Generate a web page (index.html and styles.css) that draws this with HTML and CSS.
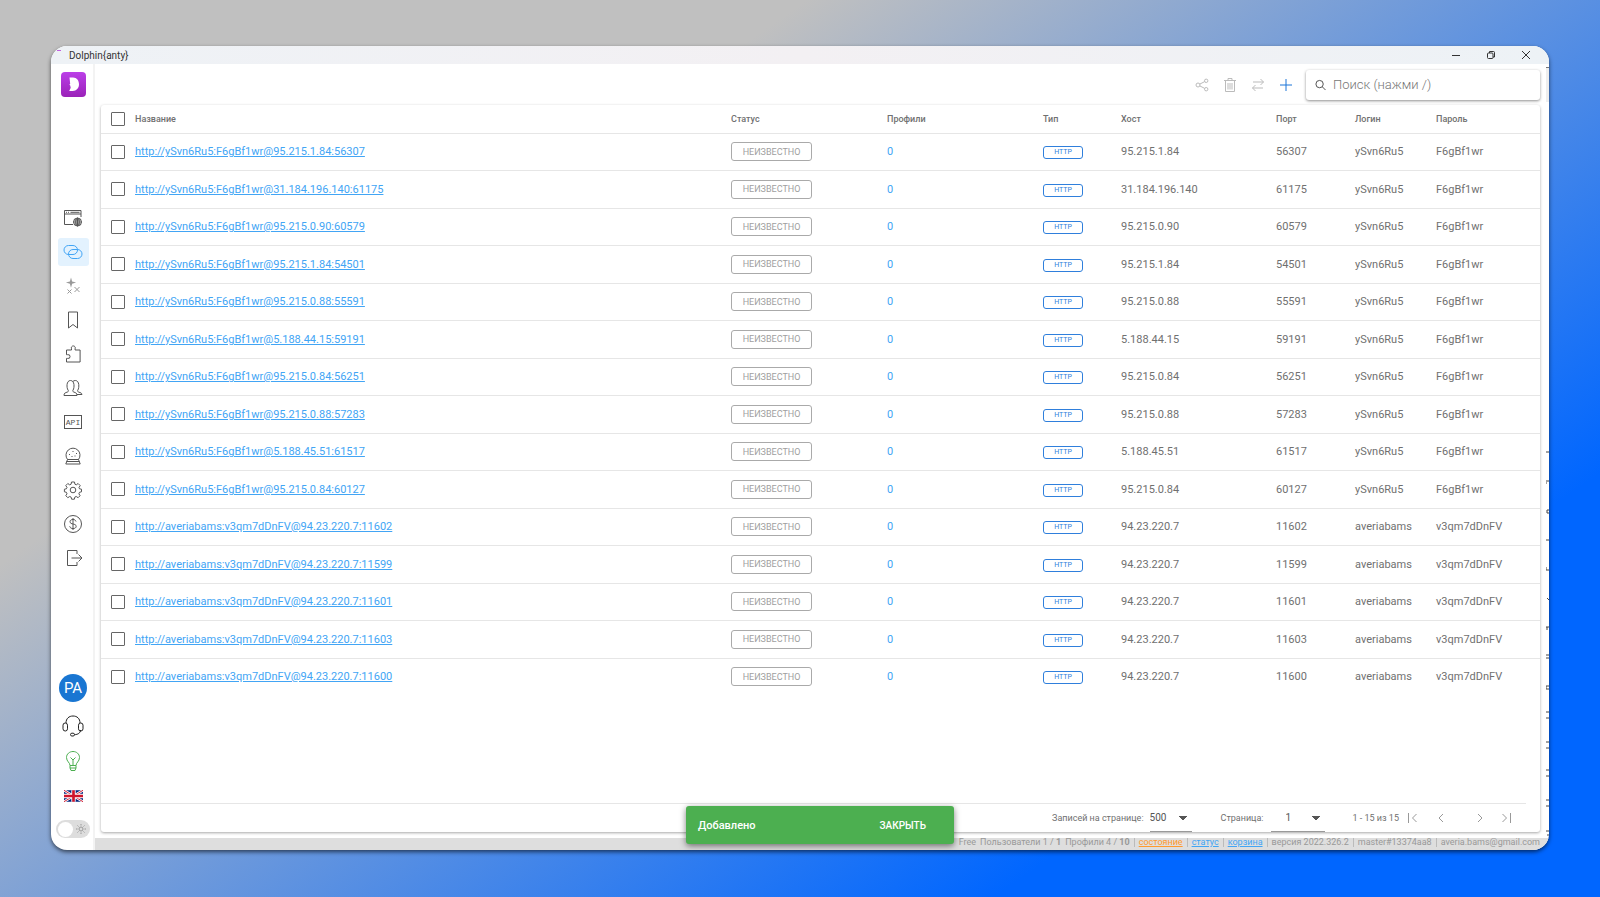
FILE: index.html
```
<!DOCTYPE html>
<html lang="ru">
<head>
<meta charset="utf-8">
<title>Dolphin{anty}</title>
<link rel="stylesheet" href="styles.css">
</head>
<body>
<div class="window">
  <header class="titlebar">
    <span class="title-mark"></span>
    <span class="title">Dolphin{anty}</span>
    <div class="win-controls">
      <button aria-label="Свернуть"><svg width="10" height="10" viewBox="0 0 10 10"><path d="M1 5.5h8"/></svg></button>
      <button aria-label="Развернуть"><svg width="10" height="10" viewBox="0 0 10 10"><rect x="1.5" y="3" width="5.500" height="5.500" rx="1"/><path d="M3.500 3V1.500h4a1 1 0 0 1 1 1V7H7"/></svg></button>
      <button aria-label="Закрыть"><svg width="10" height="10" viewBox="0 0 10 10"><path d="M1 1l8 8M9 1L1 9"/></svg></button>
    </div>
  </header>
  <div class="body">
    <nav class="sidebar">
      <a class="logo" href="#" aria-label="Dolphin"><svg width="25" height="25" viewBox="0 0 25 25"><defs><linearGradient id="lg" x1="0" y1="0" x2="0" y2="1"><stop offset="0" stop-color="#bb3fe8"/><stop offset="1" stop-color="#9a22b8"/></linearGradient></defs><rect width="25" height="25" rx="4" fill="url(#lg)" stroke="none"/><path d="M8.500 5.500H12c3.900 0 6 3 6 6.800 0 3.900-2.500 6.700-6.300 6.700H8.200l1.500-3.200-.5-2.300-.8-.8.8-1z" fill="#fff" stroke="none"/></svg></a>
      <div class="nav-main">
        <a href="#" aria-label="Профили"><svg width="20" height="20" viewBox="0 0 20 20"><path d="M10 16.500H1.500v-14H18V9M1.500 6H18M3 4.300h1M5 4.300h1M7.500 4.300h9"/><circle cx="14.500" cy="14" r="4"/><path d="M10.500 14h8M14.500 10v8M11.500 12h6M11.500 16h6"/><ellipse cx="14.500" cy="14" rx="1.800" ry="4"/></svg></a>
        <a href="#" class="active" aria-label="Прокси"><svg width="20" height="20" viewBox="0 0 20 20"><rect x="1" y="3.500" width="13.500" height="9" rx="4.500"/><rect x="5.500" y="7.500" width="13.500" height="9" rx="4.500"/></svg></a>
        <a href="#" class="pale" aria-label="Автоматизация"><svg width="20" height="20" viewBox="0 0 20 20"><path d="M4.500 13.500l4 4M8.500 13.500l-4 4M11.500 11l5 5M16.500 11l-5 5"/><path d="M8 1.500l1.100 4 4 1.100-4 1.100-1.100 4-1.100-4-4-1.100 4-1.100z" fill="currentColor" stroke="none"/></svg></a>
        <a href="#" aria-label="Закладки"><svg width="20" height="20" viewBox="0 0 20 20"><path d="M5.500 2h9v16L10 14.500 5.500 18z"/></svg></a>
        <a href="#" aria-label="Расширения"><svg width="20" height="20" viewBox="0 0 20 20"><path d="M3.500 6h5V4.800a2 2 0 1 1 3.600 0V6h5v12H3.500v-3.600h1.200a1.900 1.900 0 1 0 0-3.700H3.500z"/></svg></a>
        <a href="#" aria-label="Команда"><svg width="20" height="20" viewBox="0 0 20 20"><path d="M1 17.500c0-2.500 1-2.600 3.500-3.500 1-.4 1.200-1.300.5-2C3.500 9.800 3.200 2.500 7.500 2.500s4 7.300 2.600 9.500c-.6.800-.4 1.600.6 2 2.300.9 3.300 1 3.300 3.500z"/><path d="M10 3.400c.7-.6 1.300-.9 2.300-.9 4.300 0 4 7.300 2.600 9.500-.6.800-.4 1.600.6 2 2.300.9 3.300 1 3.500 2.500h-5"/></svg></a>
        <a href="#" aria-label="API"><svg width="20" height="20" viewBox="0 0 20 20"><rect x="1.500" y="3.500" width="17" height="13"/><text x="10" y="13">API</text></svg></a>
        <a href="#" aria-label="Сценарии"><svg width="20" height="20" viewBox="0 0 20 20"><path d="M4.500 13.500a7 7 0 1 1 11 0zM4.500 13.500L2.800 18h14.400l-1.700-4.500M3.500 15.500h13"/><path d="M10 5v1M6.500 8v1M13.500 7v1M8.500 10.500h1M12 9.500v1"/></svg></a>
        <a href="#" aria-label="Настройки"><svg width="20" height="20" viewBox="0 0 20 20"><circle cx="10" cy="10" r="2.800"/><path d="M8.500 2h3l.4 2.200 1.400.6 1.800-1.300 2.100 2.100-1.200 1.900.5 1.300 2 .4v2.600l-2 .5-.6 1.500 1.200 1.900-2 2-1.900-1.200-1.400.6-.4 2.100H8.600l-.5-2.100-1.400-.6-1.900 1.200-2-2L4 13.800l-.6-1.500-2-.5V9.200l2-.4.6-1.400-1.200-1.800 2-2.100 1.800 1.300 1.500-.6z"/></svg></a>
        <a href="#" aria-label="Оплата"><svg width="20" height="20" viewBox="0 0 20 20"><circle cx="10" cy="10" r="8.500"/><path d="M13 7.500C12.600 6 11.400 5.500 10 5.500c-1.700 0-3 .8-3 2.200 0 3.200 6.200 1.500 6.200 4.600 0 1.500-1.500 2.300-3.200 2.300-1.600 0-3-.8-3.300-2.300M10 4v12"/></svg></a>
        <a href="#" aria-label="Выход"><svg width="20" height="20" viewBox="0 0 20 20"><path d="M14 6V2.500H4.500v15H14V14M8.500 10H19M15.500 6.500L19 10l-3.500 3.500"/></svg></a>
      </div>
      <div class="nav-bottom">
        <button class="avatar">PA</button>
        <a href="#" class="dark" aria-label="Поддержка"><svg width="24" height="24" viewBox="0 0 24 24"><path d="M5 9C5 4.500 8 2 12 2s7 2.500 7 7M19.500 16c0 3-2.500 4.500-6 4.700"/><rect x="2" y="9" width="4.500" height="8" rx="2.200"/><rect x="17.500" y="9" width="4.500" height="8" rx="2.200"/><rect x="9.500" y="19.200" width="4" height="2.800" rx="1.400"/></svg></a>
        <a href="#" class="green" aria-label="Идеи"><svg width="22" height="22" viewBox="0 0 22 22"><path d="M8 15.500c0-3-3.500-4-3.500-8C4.500 4 7.500 1.500 11 1.500S17.500 4 17.500 7.500c0 4-3.500 5-3.500 8zM8 18h6M9 20.500h4M8 15.500V18l1 2.500M14 15.500V18l-1 2.500M11 15.500V10M8.500 7.500L11 10l2.500-2.500"/></svg></a>
        <a href="#" aria-label="English"><svg class="flag" width="19" height="12" viewBox="0 0 20 12"><path fill="#00247d" stroke="none" d="M0 0h20v12H0z"/><path stroke="#fff" stroke-width="2.600" d="M0 0l20 12M20 0L0 12"/><path stroke="#cf142b" stroke-width="1" d="M0 0l20 12M20 0L0 12"/><path stroke="#fff" stroke-width="4.600" d="M10 0v12M0 6h20"/><path stroke="#cf142b" stroke-width="2.800" d="M10 0v12M0 6h20"/></svg></a>
        <label class="theme"><input type="checkbox" aria-label="Тема"><svg width="12" height="12" viewBox="0 0 12 12"><circle cx="6" cy="6" r="2"/><path d="M6 1v1.500M6 9.500V11M1 6h1.500M9.500 6H11M2.500 2.500l1 1M8.500 8.500l1 1M9.500 2.500l-1 1M3.500 8.500l-1 1"/></svg></label>
      </div>
    </nav>
    <main class="main">
      <div class="toolbar">
        <button class="tool" aria-label="Поделиться"><svg width="14" height="14" viewBox="0 0 14 14"><circle cx="3" cy="7" r="2"/><circle cx="11.200" cy="2.800" r="1.700"/><circle cx="11.200" cy="11.200" r="1.700"/><path d="M4.800 6.100l4.900-2.500M4.800 7.900l4.900 2.500"/></svg></button>
        <button class="tool" aria-label="Удалить"><svg width="14" height="16" viewBox="0 0 14 16"><path d="M1 3.500h12M5 3.500V1.500h4v2M2.500 3.500v11h9v-11M5 6v6.500M7 6v6.500M9 6v6.500"/></svg></button>
        <button class="tool" aria-label="Обменять"><svg width="14" height="14" viewBox="0 0 14 14"><path d="M2 4h10.500M9.500 1l3 3-3 3M12 10H1.500M4.500 7l-3 3 3 3"/></svg></button>
        <button class="tool add" aria-label="Добавить"><svg width="14" height="14" viewBox="0 0 14 14"><path d="M7 1v12M1 7h12"/></svg></button>
        <label class="search"><svg width="12" height="12" viewBox="0 0 12 12"><circle cx="5" cy="5" r="4"/><path d="M8 8l3.500 3.500"/></svg><input type="text" placeholder="Поиск (нажми /)" aria-label="Поиск"></label>
      </div>
      <section class="card">
        <table class="grid">
          <thead><tr><th class="c-check"><input type="checkbox" aria-label="Выбрать все"></th><th>Название</th><th class="c-wide">Статус</th><th class="c-wide">Профили</th><th class="c-type">Тип</th><th class="c-host">Хост</th><th class="c-port">Порт</th><th class="c-login">Логин</th><th class="c-pass">Пароль</th></tr></thead>
          <tbody id="rows"></tbody>
        </table>
        <div class="pager">
          <label for="per">Записей на странице:</label>
          <select id="per" class="per"><option>500</option></select>
          <label for="page" class="page-label">Страница:</label>
          <select id="page" class="page"><option>1</option></select>
          <span class="range">1 - 15 из 15</span>
          <button aria-label="Первая"><svg width="12" height="10" viewBox="0 0 12 10"><path d="M1.500 0v10M9.500 1l-4 4 4 4"/></svg></button>
          <button class="prev" aria-label="Назад"><svg width="12" height="10" viewBox="0 0 12 10"><path d="M8 1L4 5l4 4"/></svg></button>
          <button class="next" aria-label="Вперёд"><svg width="12" height="10" viewBox="0 0 12 10"><path d="M4 1l4 4-4 4"/></svg></button>
          <button class="last" aria-label="Последняя"><svg width="12" height="10" viewBox="0 0 12 10"><path d="M10.500 0v10M2.500 1l4 4-4 4"/></svg></button>
        </div>
      </section>
      <footer class="status">
        <span>Free</span><span>Пользователи 1 / <b>1</b></span><span>Профили 4 / <b>10</b></span><i></i><a class="warn" href="#">состояние</a><i></i><a href="#">статус</a><i></i><a href="#">корзина</a><i></i><span>версия 2022.326.2</span><i></i><span>master#13374aa8</span><i></i><span>averia.bams@gmail.com</span>
      </footer>
    </main>
  </div>
  <div class="edge-thumb"></div>
  <svg class="edge" width="3" height="390" viewBox="0 0 3 390"><path d="M0 2h3M0 31h3M0 32v2M1 60h2M1 60v3h2M0 90h3M0 117v3h3M1 148l2 2M0 177h3M1 177v3M0 205h3M0 208h3M0 236h3M0 236v3h3M0 262h3M0 268h3M0 292h3M0 298h3M0 320h3M0 326h3M0 350h3M0 356h3M0 381h3M1 385h2"/></svg>
  <div class="toast" role="status"><span>Добавлено</span><button>ЗАКРЫТЬ</button></div>
</div>
<script src="app.js"></script>
</body>
</html>
```
FILE: app.js
```
const proxies = [
  ["ySvn6Ru5", "F6gBf1wr", "95.215.1.84", "56307"],
  ["ySvn6Ru5", "F6gBf1wr", "31.184.196.140", "61175"],
  ["ySvn6Ru5", "F6gBf1wr", "95.215.0.90", "60579"],
  ["ySvn6Ru5", "F6gBf1wr", "95.215.1.84", "54501"],
  ["ySvn6Ru5", "F6gBf1wr", "95.215.0.88", "55591"],
  ["ySvn6Ru5", "F6gBf1wr", "5.188.44.15", "59191"],
  ["ySvn6Ru5", "F6gBf1wr", "95.215.0.84", "56251"],
  ["ySvn6Ru5", "F6gBf1wr", "95.215.0.88", "57283"],
  ["ySvn6Ru5", "F6gBf1wr", "5.188.45.51", "61517"],
  ["ySvn6Ru5", "F6gBf1wr", "95.215.0.84", "60127"],
  ["averiabams", "v3qm7dDnFV", "94.23.220.7", "11602"],
  ["averiabams", "v3qm7dDnFV", "94.23.220.7", "11599"],
  ["averiabams", "v3qm7dDnFV", "94.23.220.7", "11601"],
  ["averiabams", "v3qm7dDnFV", "94.23.220.7", "11603"],
  ["averiabams", "v3qm7dDnFV", "94.23.220.7", "11600"]
];
document.getElementById("rows").innerHTML = proxies.map(([login, pass, host, port]) => {
  const url = `http://${login}:${pass}@${host}:${port}`;
  return `<tr><td class="c-check"><input type="checkbox" aria-label="${url}"></td><td><a class="name" href="#">${url}</a></td><td><button class="state">НЕИЗВЕСТНО</button></td><td><a class="count" href="#">0</a></td><td><span class="type">HTTP</span></td><td>${host}</td><td>${port}</td><td>${login}</td><td>${pass}</td></tr>`;
}).join("");
```
FILE: styles.css
```
* { box-sizing: border-box; }
body {
  margin: 0;
  min-height: 100vh;
  padding: 46px 51px 47px;
  display: flex;
  font-family: Roboto, "Noto Sans", sans-serif;
  font-size: 11px;
  color: #707070;
  background: linear-gradient(145deg, #c0c0c0 28%, #0066ff 79%);
}
button { border: 0; padding: 0; background: none; font: inherit; color: inherit; display: flex; align-items: center; justify-content: center; }
svg { fill: none; stroke: currentColor; display: block; }
a { color: #42a5f5; }
.window {
  position: relative;
  flex: 1;
  display: flex;
  flex-direction: column;
  background: #fff;
  border-radius: 16px;
  overflow: hidden;
  box-shadow: 0 2px 4px rgba(0,0,0,.6);
}
.titlebar { height: 18px; display: flex; align-items: center; background: linear-gradient(90deg, #eef2f6, #f3f0f3 50%, #edf2f6); color: #333; padding: 0 18px 0 6px; }
.title-mark { width: 4px; height: 1px; background: #c060e0; align-self: flex-start; margin-top: 4px; }
.title { margin-left: 8px; font-size: 10px; }
.win-controls { margin-left: auto; display: flex; gap: 25px; }
.body { flex: 1; display: flex; }
.sidebar { width: 44px; border-right: 2px solid #f3f3f3; display: flex; flex-direction: column; align-items: center; padding: 8px 0 12px 2px; color: #555; }
.sidebar a { color: inherit; display: flex; align-items: center; justify-content: center; }
.sidebar .logo { height: 25px; }
.nav-main { margin-top: 107px; display: flex; flex-direction: column; gap: 6px; }
.nav-main a { width: 31px; height: 28px; border-radius: 3px; }
.nav-main .active { background: #e3f2fe; color: #42a5f5; }
.nav-main .pale { color: #999; }
.nav-main text { font: 500 8px "Liberation Mono", monospace; text-anchor: middle; fill: currentColor; stroke: none; }
.nav-bottom { margin-top: auto; display: flex; flex-direction: column; align-items: center; gap: 12px; }
.avatar { width: 28px; height: 28px; border-radius: 50%; background: #1976d2; color: #fff; font-size: 15px; }
.sidebar .dark { color: #222; }
.sidebar .green { color: #4caf50; }
.flag { margin: 6px 0; }
.theme { width: 34px; height: 18px; border-radius: 9px; background: #ddd; display: flex; align-items: center; gap: 2px; padding: 0 2px; color: #999; }
.theme input { appearance: none; margin: 0; width: 15px; height: 15px; border-radius: 50%; background: #fff; }
.main { flex: 1; display: flex; flex-direction: column; }
.toolbar { display: flex; justify-content: flex-end; align-items: center; height: 41px; padding: 0 9px 0 0; color: #bbb; }
.tool { width: 28px; height: 28px; }
.tool.add { color: #1a75d8; }
.search { width: 234px; height: 30px; margin-left: 6px; border-radius: 3px; background: #fff; box-shadow: 0 1px 3px rgba(0,0,0,.45); display: flex; align-items: center; gap: 7px; padding: 0 9px; color: #444; }
.search input { border: 0; outline: 0; background: none; width: 100%; padding: 0; font: 300 13px Roboto, sans-serif; }
.search input::placeholder { color: #777; opacity: 1; }
.card { flex: 1; margin: 0 9px 6px 6px; border-radius: 3px; box-shadow: 0 1px 3px rgba(0,0,0,.35); display: flex; flex-direction: column; }
.grid { width: 100%; height: 590px; table-layout: fixed; border-collapse: collapse; }
th, td { padding: 0; text-align: left; white-space: nowrap; border-bottom: 1px solid #e6e6e6; vertical-align: middle; }
th { height: 28px; font-size: 9px; font-weight: 500; color: #707070; }
tbody tr:last-child td { border-bottom: 0; }
.c-check { width: 34px; padding-left: 10px; }
.c-check input { appearance: none; display: block; margin: 0; width: 14px; height: 14px; border: 1px solid #666; border-radius: 1px; }
.c-wide { width: 156px; }
.c-type { width: 78px; }
.c-host { width: 155px; }
.c-port { width: 79px; }
.c-login { width: 81px; }
.c-pass { width: 104px; }
.state { width: 81px; height: 19px; border: 1px solid #aaa; border-radius: 3px; font-size: 9px; color: #a0a0a0; }
.count { text-decoration: none; }
.type { display: block; width: 40px; height: 13px; margin-top: 2px; border: 1px solid #2f7fdc; border-radius: 3px; font-size: 7px; line-height: 11px; text-align: center; color: #2f7fdc; }
.pager { margin-top: auto; margin-right: 14px; height: 29px; border-top: 1px solid #e6e6e6; display: flex; align-items: center; justify-content: flex-end; font-size: 9px; }
.pager svg { color: #999; }
.pager select { appearance: none; height: 28px; border: 0; border-bottom: 1px solid #999; border-radius: 0; font: inherit; font-size: 10px; color: #555; padding: 0; background: conic-gradient(from -45deg at 50% 100%, #555 90deg, transparent 0) right 5px center / 8px 4px no-repeat; }
.per { width: 42px; margin-left: 6px; }
.page-label { margin-left: 29px; }
.pager .page { width: 54px; margin-left: 7px; padding-left: 15px; }
.range { margin: 0 8px 0 28px; }
.prev { margin-left: 16px; }
.next { margin-left: 27px; }
.last { margin: 0 14px 0 14px; }
.status { height: 12px; background: #dedede; display: flex; align-items: center; justify-content: flex-end; gap: 4px; padding: 0 9px 3px 0; font-size: 9px; line-height: 9px; color: #999; }
.status i { width: 1px; height: 9px; background: #bbb; }
.status .warn { color: #ff9a2e; }
.edge-thumb { position: absolute; right: 0; top: 21px; width: 3px; height: 35px; background: #eee; border-top: 1px solid #777; }
.edge { position: absolute; right: 0; top: 404px; color: #444; }
.toast { position: absolute; left: 635px; bottom: 6px; width: 268px; height: 38px; border-radius: 3px; background: #4caf50; color: #fff; display: flex; align-items: center; justify-content: space-between; padding: 0 28px 0 12px; font-size: 11px; font-weight: 500; box-shadow: 0 2px 6px rgba(0,0,0,.5); }
.toast button { font-size: 10px; }
```
